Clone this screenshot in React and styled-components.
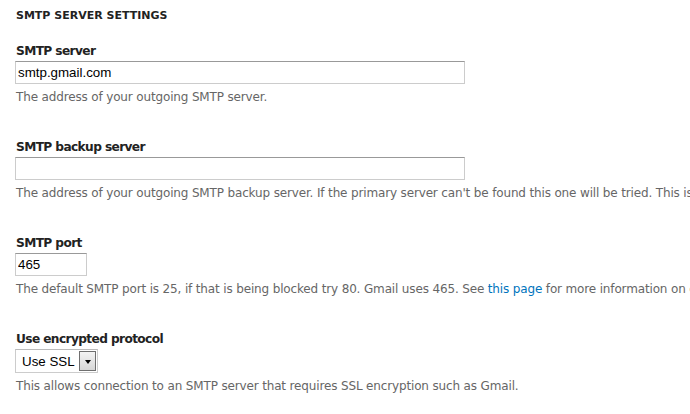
import React from "react";
import styled, { createGlobalStyle } from "styled-components";

const GlobalStyle = createGlobalStyle`
  html, body {
    margin: 0;
    padding: 0;
    background: #fff;
    overflow: hidden;
  }
  body {
    font-family: "DejaVu Sans", Verdana, sans-serif;
    color: #333;
  }
`;

const Page = styled.div`
  padding: 8px 15px 0;
`;

const SectionTitle = styled.h2`
  margin: 0 0 18px;
  font-size: 11px;
  line-height: 16px;
  font-weight: bold;
  text-transform: uppercase;
  color: #222;
  padding-left: 1px;
`;

const Field = styled.div`
  margin-bottom: 33px;
`;

const Label = styled.label`
  display: block;
  font-size: 12.2px;
  line-height: 16px;
  font-weight: bold;
  letter-spacing: -0.62px;
  color: #222;
  padding: 1px 0 0 1px;
  margin-bottom: 2px;
`;

const TextInput = styled.input`
  box-sizing: border-box;
  display: block;
  width: ${(p) => p.$width}px;
  height: 23px;
  margin: 0;
  padding: 0 2px;
  border: 1px solid #ccc;
  border-top-color: #999;
  border-radius: 0;
  font-family: "Liberation Sans", Arial, sans-serif;
  font-size: 13.33px;
  color: #000;
  background: #fff;
  outline: none;
`;

const SelectBox = styled.div`
  box-sizing: border-box;
  display: flex;
  align-items: stretch;
  width: 83px;
  height: 24px;
  border: 1px solid #ccc;
  border-top-color: #bbb;
  background: #fff;
  padding: 1px 1px 1px 0;
`;

const NativeSelect = styled.select`
  flex: 1;
  min-width: 0;
  appearance: none;
  -webkit-appearance: none;
  border: none;
  margin: 0;
  padding: 0 0 0 6px;
  background: transparent;
  font-family: "Liberation Sans", Arial, sans-serif;
  font-size: 13.33px;
  color: #000;
  outline: none;
`;

const DropButton = styled.span`
  box-sizing: border-box;
  width: 17px;
  display: flex;
  align-items: center;
  justify-content: center;
  border: 1px solid #6f6f6f;
  background: linear-gradient(#f4f4f4, #d6d6d6);
`;

const Arrow = styled.span`
  width: 0;
  height: 0;
  border-left: 3.5px solid transparent;
  border-right: 3.5px solid transparent;
  border-top: 4px solid #000;
  margin-top: 1px;
`;

const Description = styled.div`
  margin-top: 5px;
  padding-left: 1px;
  font-size: 12px;
  line-height: 16px;
  letter-spacing: -0.15px;
  color: #666;
  white-space: nowrap;
`;

const Link = styled.a`
  color: #0074bd;
  text-decoration: none;
`;

export default function App() {
  return (
    <>
      <GlobalStyle />
      <Page>
        <SectionTitle>SMTP server settings</SectionTitle>

        <Field>
          <Label htmlFor="smtp-host">SMTP server</Label>
          <TextInput id="smtp-host" $width={450} defaultValue="smtp.gmail.com" />
          <Description>The address of your outgoing SMTP server.</Description>
        </Field>

        <Field>
          <Label htmlFor="smtp-backup">SMTP backup server</Label>
          <TextInput id="smtp-backup" $width={450} defaultValue="" />
          <Description>
            The address of your outgoing SMTP backup server. If the primary server can't be found this one
            will be tried. This is optional.
          </Description>
        </Field>

        <Field>
          <Label htmlFor="smtp-port">SMTP port</Label>
          <TextInput id="smtp-port" $width={72} defaultValue="465" />
          <Description>
            The default SMTP port is 25, if that is being blocked try 80. Gmail uses 465. See{" "}
            <Link href="#">this page</Link> for more information on configuring Gmail.
          </Description>
        </Field>

        <Field>
          <Label htmlFor="smtp-protocol">Use encrypted protocol</Label>
          <SelectBox>
            <NativeSelect id="smtp-protocol" defaultValue="ssl">
              <option value="standard">No</option>
              <option value="ssl">Use SSL</option>
              <option value="tls">Use TLS</option>
            </NativeSelect>
            <DropButton>
              <Arrow />
            </DropButton>
          </SelectBox>
          <Description>
            This allows connection to an SMTP server that requires SSL encryption such as Gmail.
          </Description>
        </Field>
      </Page>
    </>
  );
}
